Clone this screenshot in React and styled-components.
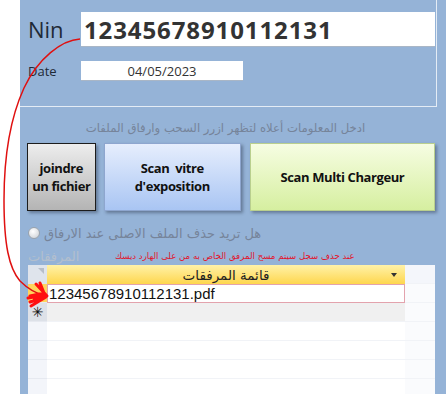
import React from 'react'
import styled, { createGlobalStyle } from 'styled-components'

const GlobalStyle = createGlobalStyle`
  html, body {
    margin: 0;
    padding: 0;
    background: #ffffff;
  }
  body {
    font-family: "Open Sans", "DejaVu Sans", sans-serif;
  }
`

const Page = styled.div`
  position: relative;
  width: 446px;
  height: 394px;
  padding-left: 20px;
  box-sizing: border-box;
  overflow: hidden;
`

const Panel = styled.div`
  height: 100%;
  background: #95b3d7;
  display: flex;
  flex-direction: column;
`

const Header = styled.div`
  width: 417px;
  height: 107px;
  box-sizing: border-box;
  border-right: 1px solid #e4ecf5;
  border-bottom: 1px solid #e4ecf5;
  padding: 12px 1px 0 8px;
  display: grid;
  grid-template-columns: 53px 1fr;
  grid-template-rows: 35px 20px;
  row-gap: 14px;
  align-items: center;
`

const Label = styled.span`
  font-family: "Open Sans", sans-serif;
  font-size: ${p => p.$size}px;
  color: #1f2a36;
  line-height: 1;
  margin-top: ${p => p.$shift || 0}px;
`

const Field = styled.div`
  height: 100%;
  width: ${p => p.$width || 'auto'};
  background: #ffffff;
  box-sizing: border-box;
  border-bottom: 1px solid #a9b6c6;
  display: flex;
  align-items: center;
  justify-content: ${p => (p.$center ? 'center' : 'flex-start')};
  padding-left: ${p => (p.$center ? 0 : 3)}px;
  font-family: "Open Sans", sans-serif;
  font-size: ${p => p.$size}px;
  font-weight: ${p => (p.$bold ? 700 : 400)};
  letter-spacing: ${p => p.$spacing || 0}px;
  color: #333333;
`

const Body = styled.div`
  padding: 0 11px 0 8px;
  display: flex;
  flex-direction: column;
  flex: 1;
  min-height: 0;
`

const Hint = styled.div`
  direction: rtl;
  text-align: center;
  white-space: nowrap;
  font-family: "DejaVu Sans", sans-serif;
  font-size: 11.7px;
  color: #76849a;
  height: 14px;
  line-height: 14px;
  margin-top: 14px;
  padding-right: 12px;
`

const ButtonRow = styled.div`
  display: flex;
  margin-top: 8px;
  margin-left: -1px;
  height: 68px;
`

const ActionButton = styled.button`
  width: ${p => p.$width}px;
  margin-right: ${p => p.$gap || 0}px;
  height: 68px;
  box-sizing: border-box;
  border: 1px solid ${p => p.$border};
  background: linear-gradient(${p => p.$from}, ${p => p.$to});
  box-shadow: 2px 2px 3px rgba(40, 50, 70, 0.45);
  font-family: "Open Sans", sans-serif;
  font-weight: 700;
  font-size: 13px;
  line-height: 18px;
  letter-spacing: -0.4px;
  color: #111111;
  padding: 0 2px;
  text-align: center;
`

const RadioRow = styled.div`
  display: flex;
  align-items: center;
  gap: 4px;
  margin-top: 15px;
  height: 14px;
`

const Radio = styled.span`
  width: 10px;
  height: 10px;
  flex: none;
  border-radius: 50%;
  border: 1px solid #9aa3ad;
  background: radial-gradient(circle at 40% 35%, #ffffff, #c8ccd2);
`

const FaintText = styled.span`
  direction: rtl;
  white-space: nowrap;
  font-family: "DejaVu Sans", sans-serif;
  font-size: 13px;
  color: #76849a;
`

const NoteRow = styled.div`
  display: flex;
  align-items: center;
  height: 14px;
  margin-top: 9px;
  white-space: nowrap;
`

const SmallLabel = styled.span`
  direction: rtl;
  width: 87px;
  flex: none;
  text-align: left;
  font-family: "DejaVu Sans", sans-serif;
  font-size: 13px;
  color: #b3bfce;
`

const Warning = styled.span`
  direction: rtl;
  font-family: "DejaVu Sans", sans-serif;
  font-size: 8.6px;
  color: #e2142c;
`

const Grid = styled.div`
  margin-top: 2px;
  flex: 1;
  background: #ffffff;
  display: grid;
  grid-template-columns: 19px 358px 1fr;
  grid-auto-rows: 19px;
  overflow: hidden;
`

const Selector = styled.div`
  background: ${p => p.$bg || '#f3f5fa'};
  border-bottom: 1px solid #e6e9f0;
  box-sizing: border-box;
  display: flex;
  align-items: center;
  justify-content: center;
  font-family: "DejaVu Sans", sans-serif;
  font-size: 14px;
  color: #111;
`

const Corner = styled.div`
  background: #dfe4ec;
  position: relative;
  &::after {
    content: '';
    position: absolute;
    right: 3px;
    top: 3px;
    border-left: 6px solid transparent;
    border-top: 6px solid #b7bec9;
  }
`

const HeadCell = styled.div`
  background: linear-gradient(#fff2a8, #fed64e);
  display: flex;
  align-items: center;
  justify-content: center;
  position: relative;
  direction: rtl;
  font-family: "DejaVu Sans", sans-serif;
  font-size: 13.5px;
  color: #222;
`

const Drop = styled.span`
  position: absolute;
  right: 8px;
  top: 8px;
  border-left: 3px solid transparent;
  border-right: 3px solid transparent;
  border-top: 4px solid #333;
`

const Cell = styled.div`
  background: ${p => p.$bg || '#ffffff'};
  box-sizing: border-box;
  border: ${p => (p.$active ? '1px solid #e3a3ad' : 'none')};
  border-bottom: 1px solid ${p => (p.$active ? '#e3a3ad' : '#f1f3f7')};
  display: flex;
  align-items: center;
  padding-left: 1px;
  font-family: "Liberation Sans", Arial, sans-serif;
  font-size: 15px;
  color: #111;
`

const Spare = styled.div`
  background: ${p => (p.$head ? '#f4f6fb' : '#fafbfd')};
  border-bottom: 1px solid #f1f3f7;
`

const Scribble = styled.svg`
  position: absolute;
  left: 0;
  top: 0;
  pointer-events: none;
`

const emptyRows = [0, 1, 2, 3, 4]

export default function App() {
  return (
    <>
      <GlobalStyle />
      <Page>
        <Panel>
          <Header>
            <Label $size={22} $shift={-2}>Nin</Label>
            <Field $size={24} $bold $spacing={0.9}>12345678910112131</Field>
            <Label $size={13}>Date</Label>
            <Field $size={13} $width="162px" $center>04/05/2023</Field>
          </Header>
          <Body>
            <Hint>ادخل المعلومات أعلاه لتظهر ازرر السحب وارفاق الملفات</Hint>
            <ButtonRow>
              <ActionButton $width={69} $gap={8} $border="#1c1c1c" $from="#ededed" $to="#b4b4b4">
                joindre<br />un fichier
              </ActionButton>
              <ActionButton $width={138} $gap={9} $border="#8ea6cf" $from="#e6eefd" $to="#a9c5f3">
                Scan&nbsp; vitre<br />d'exposition
              </ActionButton>
              <ActionButton $width={186} $border="#b9cf8e" $from="#f6fde2" $to="#d6efa0">
                Scan Multi Chargeur
              </ActionButton>
            </ButtonRow>
            <RadioRow>
              <Radio />
              <FaintText>هل تريد حذف الملف الاصلى عند الارفاق</FaintText>
            </RadioRow>
            <NoteRow>
              <SmallLabel>المرفقات</SmallLabel>
              <Warning>عند حذف سجل سيتم مسح المرفق الخاص به من على الهارد ديسك</Warning>
            </NoteRow>
            <Grid>
              <Corner />
              <HeadCell>
                قائمة المرفقات
                <Drop />
              </HeadCell>
              <Spare $head />

              <Selector $bg="#ffd45c" />
              <Cell $active>12345678910112131.pdf</Cell>
              <Spare />

              <Selector $bg="#dde1e8">✳</Selector>
              <Cell $bg="#f0f0f0" />
              <Spare />

              {emptyRows.map(i => (
                <React.Fragment key={i}>
                  <Selector />
                  <Cell />
                  <Spare />
                </React.Fragment>
              ))}
            </Grid>
          </Body>
        </Panel>
        <Scribble width="446" height="394" viewBox="0 0 446 394">
          <path
            d="M80 39 C62 40 38 58 24 88 C13 112 4 150 4 200 C4 245 9 268 20 281 C28 289 37 294 46 296"
            fill="none"
            stroke="#e01010"
            strokeWidth="1.5"
          />
          <path
            d="M36 284 L47 296 L34 300 M40 283 L44 293 L30 296 M30 302 L46 297 L31 306 M28 298 L46 295"
            fill="none"
            stroke="#ff1010"
            strokeWidth="3"
            strokeLinecap="round"
            strokeLinejoin="round"
          />
        </Scribble>
      </Page>
    </>
  )
}
